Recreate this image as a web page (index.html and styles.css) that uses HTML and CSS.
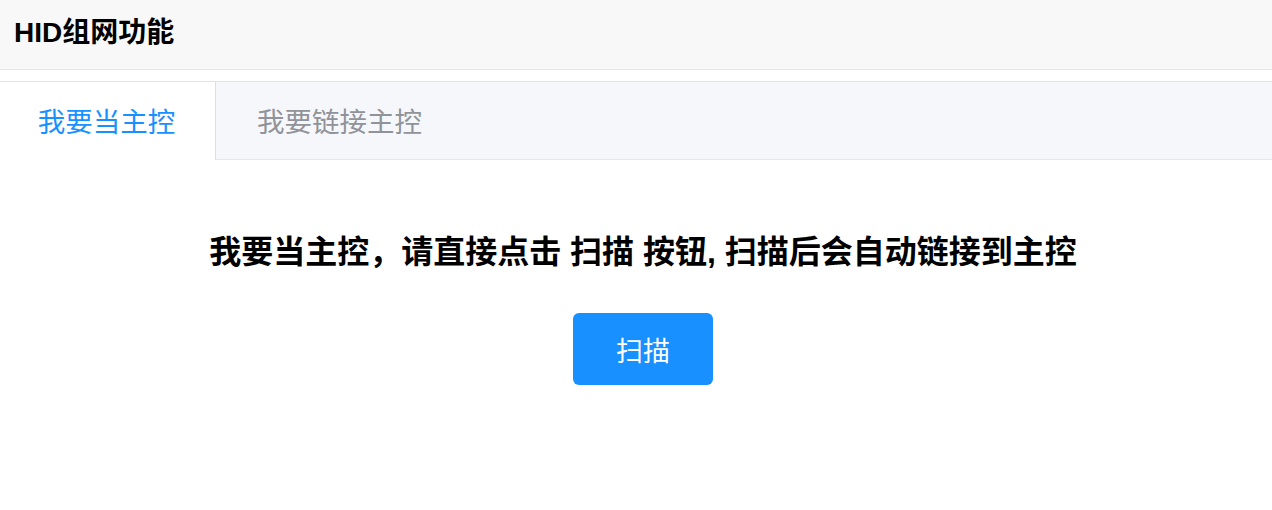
FILE: index.html
```html
<!DOCTYPE html>
<html>

<head>
    <title>HID组网功能</title>
    <link rel="stylesheet" href="styles.css">
</head>

<body>
    <h1 class="nav-bar">HID组网功能</h1>
    <div class="tabs">
        <div class="tab active">我要当主控</div>
        <div class="tab">我要链接主控</div>
        <div class="tab-rest"></div>
    </div>
    <div class="panel">
        <p class="tip">我要当主控，请直接点击 扫描 按钮, 扫描后会自动链接到主控</p>
        <button class="scan-btn">扫描</button>
    </div>
</body>

</html>
```
FILE: styles.css
```css
body {
    font-family: "Liberation Sans", "Noto Sans CJK SC", sans-serif;
    background-color: #fff;
    margin: 0;
    padding: 0;
}

h1.nav-bar {
    margin: 0;
    height: 69px;
    line-height: 66px;
    padding: 0 14px;
    background-color: #f8f8f9;
    border-bottom: 1px solid #e4e5e8;
    color: #000;
    font-size: 28px;
    font-weight: bold;
}

.tabs {
    display: flex;
    margin-top: 11px;
    height: 78px;
    border-top: 1px solid #e1e3e8;
    background-color: #f5f7fa;
}

.tab {
    padding: 0 41px;
    line-height: 82px;
    font-size: 27.5px;
    color: #909399;
    border-bottom: 1px solid #e4e7ed;
}

.tab.active {
    width: 216px;
    box-sizing: border-box;
    padding: 0 2px 0 0;
    text-align: center;
    color: #1890ff;
    background-color: #fff;
    border-right: 1px solid #dcdfe6;
    border-bottom: none;
}

.tab-rest {
    flex: 1;
    border-bottom: 1px solid #e4e7ed;
}

.panel {
    display: flex;
    flex-direction: column;
    align-items: center;
    padding: 72px 0 0 14px;
}

.tip {
    margin: 0;
    font-size: 32px;
    line-height: 40px;
    font-weight: bold;
    color: #000;
}

.scan-btn {
    margin-top: 41px;
    width: 140px;
    height: 72px;
    border: none;
    border-radius: 6px;
    background-color: #1890ff;
    color: #fff;
    font-family: inherit;
    font-size: 27px;
    cursor: pointer;
}
```
